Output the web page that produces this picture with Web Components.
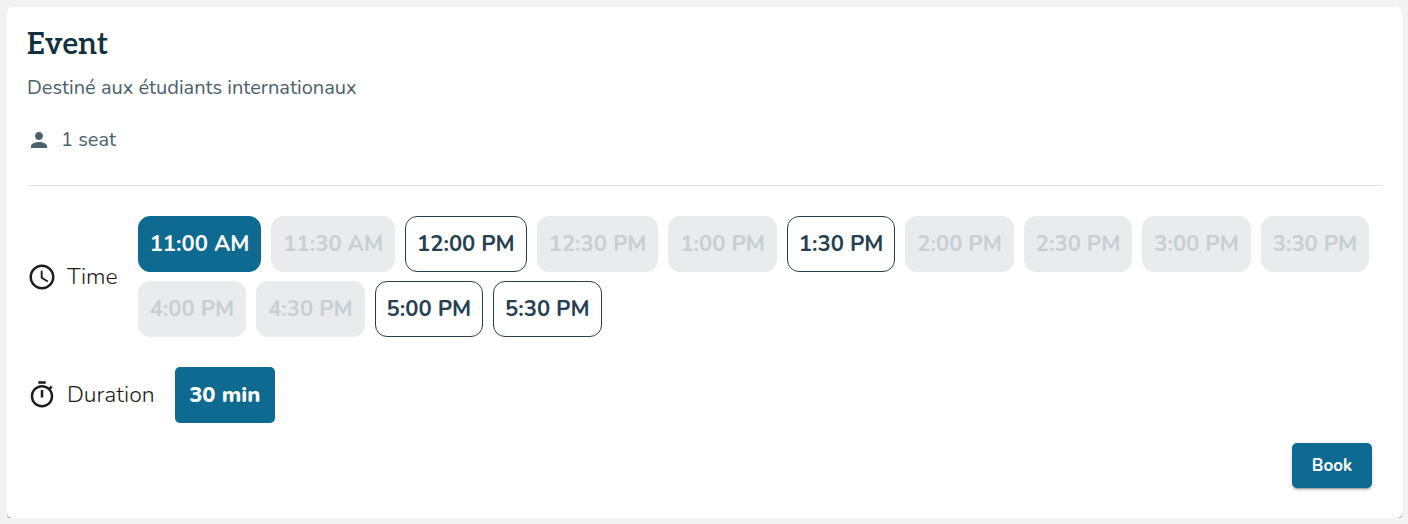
<!DOCTYPE html>
<html lang="en">
<head>
<meta charset="utf-8">
<meta name="viewport" content="width=device-width, initial-scale=1">
<title>Event</title>
<style>
  body {
    margin: 7px 6px 6px 7px;
    background: #f2f2f2;
    font-family: "Nunito", "Open Sans", "Noto Sans", sans-serif;
    --accent: #0e6a91;
    --heading: #12303f;
    --muted: #4a626d;
    --outline: #263f52;
  }
</style>
</head>
<body>
<event-card>
  <span slot="title">Event</span>
  <span slot="description">Destiné aux étudiants internationaux</span>
  <seat-count slot="meta">1 seat</seat-count>
  <option-row icon="clock">
    <span slot="label">Time</span>
    <time-slot state="selected">11:00 AM</time-slot>
    <time-slot state="disabled">11:30 AM</time-slot>
    <time-slot>12:00 PM</time-slot>
    <time-slot state="disabled">12:30 PM</time-slot>
    <time-slot state="disabled">1:00 PM</time-slot>
    <time-slot>1:30 PM</time-slot>
    <time-slot state="disabled">2:00 PM</time-slot>
    <time-slot state="disabled">2:30 PM</time-slot>
    <time-slot state="disabled">3:00 PM</time-slot>
    <time-slot state="disabled">3:30 PM</time-slot>
    <time-slot state="disabled">4:00 PM</time-slot>
    <time-slot state="disabled">4:30 PM</time-slot>
    <time-slot>5:00 PM</time-slot>
    <time-slot>5:30 PM</time-slot>
  </option-row>
  <option-row icon="timer">
    <span slot="label">Duration</span>
    <duration-option>30 min</duration-option>
  </option-row>
  <book-button slot="actions">Book</book-button>
</event-card>

<script>
const define = (name, render, setup) => customElements.define(name, class extends HTMLElement {
  constructor() {
    super();
    this.attachShadow({ mode: "open" }).innerHTML = render(this);
  }
  connectedCallback() { if (setup) setup(this); }
});

const ICONS = {
  clock: "M11.99 2C6.47 2 2 6.48 2 12s4.47 10 9.99 10C17.52 22 22 17.52 22 12S17.52 2 11.99 2zM12 20c-4.42 0-8-3.58-8-8s3.58-8 8-8 8 3.58 8 8-3.58 8-8 8zm.5-13H11v6l5.25 3.15.75-1.23-4.5-2.67z",
  timer: "M15 1H9v2h6V1zm-4 13h2V8h-2v6zm8.03-6.61l1.42-1.42c-.43-.51-.9-.99-1.41-1.41l-1.42 1.42C16.07 4.74 14.12 4 12 4c-4.97 0-9 4.03-9 9s4.02 9 9 9 9-4.03 9-9c0-2.12-.74-4.07-1.97-5.61zM12 20c-3.87 0-7-3.13-7-7s3.13-7 7-7 7 3.13 7 7-3.13 7-7 7z",
  person: "M12 12c2.21 0 4-1.79 4-4s-1.79-4-4-4-4 1.79-4 4 1.79 4 4 4zm0 2c-2.67 0-8 1.34-8 4v2h16v-2c0-2.66-5.33-4-8-4z"
};
const icon = name => `<svg viewBox="0 0 24 24" aria-hidden="true"><path fill="currentColor" d="${ICONS[name]}"/></svg>`;

define("event-card", () => `
  <style>
    :host { display: block; }
    article {
      display: flex; flex-direction: column;
      padding: 20px 20px 30px;
      border-radius: 5px; background: #fff;
      box-shadow: 0 1px 0 rgba(0,0,0,.22), 0 1px 1px rgba(0,0,0,.14), 0 1px 3px rgba(0,0,0,.12);
    }
    header { padding-bottom: 31px; border-bottom: 1px solid #e0e2e3; }
    h1 {
      margin: 0; color: var(--heading);
      font: 600 30px/36px "Museo Slab", "Aleo", "Bitter", "Zilla Slab", "DejaVu Serif Condensed", serif;
    }
    p { margin: 11px 0 24px; color: var(--muted); font-size: 20px; font-weight: 400; line-height: 28px; }
    .options { display: flex; flex-direction: column; gap: 30px; padding: 30px 0 20px; }
    footer { display: flex; justify-content: flex-end; padding-right: 10px; }
  </style>
  <article>
    <header>
      <h1><slot name="title"></slot></h1>
      <p><slot name="description"></slot></p>
      <slot name="meta"></slot>
    </header>
    <div class="options"><slot></slot></div>
    <footer><slot name="actions"></slot></footer>
  </article>`);

define("seat-count", () => `
  <style>
    :host { display: flex; align-items: center; gap: 10px; color: var(--muted); font-size: 20px; font-weight: 400; line-height: 28px; }
    svg { width: 24px; height: 24px; }
  </style>
  ${icon("person")}<span><slot></slot></span>`);

define("option-row", host => `
  <style>
    :host { display: flex; align-items: center; gap: 20px; }
    .label { display: flex; align-items: center; gap: 10px; color: #1c1c1c; font-size: 23px; font-weight: 300; line-height: 32px; }
    svg { width: 30px; height: 30px; }
    .choices { flex: 1; display: flex; flex-wrap: wrap; gap: 9px 10px; }
  </style>
  <div class="label" id="label">${icon(host.getAttribute("icon"))}<slot name="label"></slot></div>
  <div class="choices" role="group" aria-labelledby="label"><slot></slot></div>`);

define("time-slot", () => `
  <style>
    :host { display: block; }
    button {
      height: 56px; padding: 0 11px;
      border: 1px solid var(--outline); border-radius: 12px;
      background: #fff; color: var(--outline);
      font: 700 22px/30px "Nunito", "Open Sans", "Noto Sans", sans-serif; white-space: nowrap;
    }
    :host([state="selected"]) button { border-color: var(--accent); background: var(--accent); color: #fff; }
    button:disabled { border-color: #e9ebec; background: #e9ebec; color: #c8cfd3; }
  </style>
  <button type="button"><slot></slot></button>`,
  host => {
    const button = host.shadowRoot.querySelector("button");
    button.disabled = host.getAttribute("state") === "disabled";
    button.setAttribute("aria-pressed", host.getAttribute("state") === "selected");
  });

define("duration-option", () => `
  <style>
    :host { display: block; }
    button {
      min-width: 100px; height: 56px; padding: 0 12px;
      border: 0; border-radius: 5px; background: var(--accent); color: #fff;
      font: 800 22px/30px "Nunito", "Open Sans", "Noto Sans", sans-serif; white-space: nowrap;
    }
  </style>
  <button type="button" aria-pressed="true"><slot></slot></button>`);

define("book-button", () => `
  <style>
    :host { display: block; }
    button {
      min-width: 80px; height: 45px; padding: 0 16px;
      border: 0; border-radius: 5px; background: var(--accent); color: #fff;
      font: 700 17px/24px "Nunito", "Open Sans", "Noto Sans", sans-serif;
      box-shadow: 0 3px 1px -2px rgba(0,0,0,.2), 0 2px 2px rgba(0,0,0,.14), 0 1px 5px rgba(0,0,0,.12);
    }
  </style>
  <button type="button"><slot></slot></button>`);
</script>
</body>
</html>
